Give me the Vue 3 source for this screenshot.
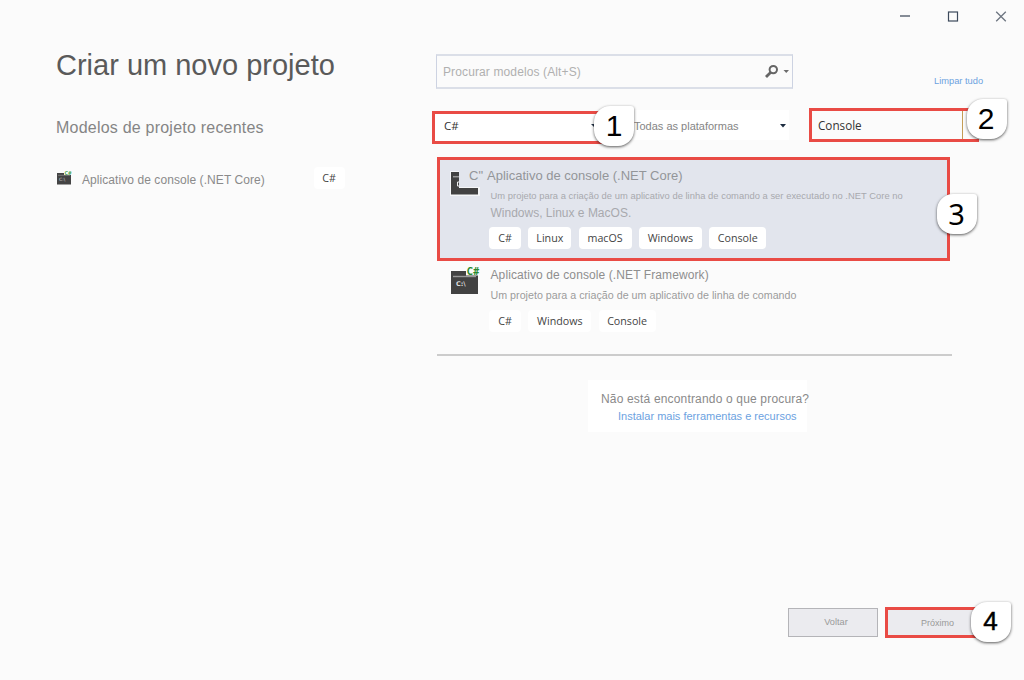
<script setup>
const windowsCore = ['C#', 'Linux', 'macOS', 'Windows', 'Console']
const windowsFramework = ['C#', 'Windows', 'Console']
const tagWidth = { 'C#': 32, Linux: 43, macOS: 53, Windows: 63, Console: 57 }
</script>

<template>
  <div class="window">
    <header class="titlebar">
      <svg width="120" height="32" viewBox="0 0 120 32" fill="none">
        <path d="M4 16H14" stroke="#858c96" stroke-width="2" />
        <rect x="52.500" y="12" width="9" height="9" stroke="#3d4a5c" stroke-width="1.200" />
        <path d="M100.200 11.700L109.800 21.300M109.800 11.700L100.200 21.300" stroke="#6d7580" stroke-width="1.300" />
      </svg>
    </header>

    <main class="body">
      <section class="recent">
        <h1>Criar um novo projeto</h1>
        <h2>Modelos de projeto recentes</h2>
        <div class="recent-item">
          <svg class="mini-icon" width="16" height="16" viewBox="0 0 16 16">
            <path d="M1 3H8V5H15V14.500H1Z" fill="#444" />
            <path d="M2 5.300H14" stroke="#888" stroke-width=".7" />
            <text x="3" y="10.800" class="mini-prompt">C:\</text>
            <text x="8.500" y="4.600" class="mini-sharp">C#</text>
          </svg>
          <span class="recent-name">Aplicativo de console (.NET Core)</span>
          <span class="tag recent-tag">C#</span>
        </div>
      </section>

      <section class="catalog">
        <div class="search-row">
          <div class="search">
            <span>Procurar modelos (Alt+S)</span>
            <svg width="28" height="16" viewBox="0 0 28 16">
              <circle cx="11.300" cy="5.600" r="3.700" fill="none" stroke="#666" stroke-width="2" />
              <path d="M8.800 8.200L4 13" stroke="#666" stroke-width="2.800" />
              <path d="M21.500 6H27L24.250 9Z" fill="#6c6c6c" />
            </svg>
          </div>
          <a class="clear">Limpar tudo</a>
        </div>

        <div class="filters">
          <div class="filter language">
            <span>C#</span>
            <svg class="language-arrow" width="6" height="4" viewBox="0 0 6 4"><path d="M0 0H6L3 3Z" fill="#26364a" /></svg>
            <b class="badge one">1</b>
          </div>
          <div class="filter platform">
            <span>Todas as plataformas</span>
            <svg width="6" height="4" viewBox="0 0 6 4"><path d="M0 0H6L3 3.500Z" fill="#1d2c40" /></svg>
          </div>
          <div class="filter type">
            <span>Console</span>
            <i></i>
            <b class="badge two">2</b>
          </div>
        </div>

        <article class="card selected">
          <svg class="icon" width="32" height="30" viewBox="0 0 32 30">
            <path d="M0 4H9V20H30V29H0Z" fill="#f5f6f8" />
            <path d="M1 5H9V21H28V27.500H1Z" fill="#424242" />
            <path d="M3 9.700H9" stroke="#999" stroke-width="1.500" />
            <path d="M9 15H7.500V19H9" fill="none" stroke="#eee" stroke-width="1" />
          </svg>
          <div class="info">
            <h3><span class="mark">C"</span>Aplicativo de console (.NET Core)</h3>
            <p class="small">Um projeto para a criação de um aplicativo de linha de comando a ser executado no .NET Core no</p>
            <p class="second">Windows, Linux e MacOS.</p>
            <div class="tags">
              <span v-for="tag in windowsCore" :key="tag" class="tag" :style="{ width: tagWidth[tag] + 'px' }">{{ tag }}</span>
            </div>
          </div>
          <b class="badge three">3</b>
        </article>

        <article class="card framework">
          <svg class="icon" width="32" height="30" viewBox="0 0 32 30">
            <path d="M1 5H16V9.500H28V28H1Z" fill="#424242" />
            <path d="M3 10.500H26" stroke="#999" stroke-width="1.400" />
            <text x="6" y="19.500" class="prompt">C:\</text>
            <text x="16.800" y="8.500" class="sharp">C#</text>
          </svg>
          <div class="info">
            <h3>Aplicativo de console (.NET Framework)</h3>
            <p>Um projeto para a criação de um aplicativo de linha de comando</p>
            <div class="tags">
              <span v-for="tag in windowsFramework" :key="tag" class="tag" :style="{ width: tagWidth[tag] + 'px' }">{{ tag }}</span>
            </div>
          </div>
        </article>

        <hr />
        <div class="missing">
          <span>Não está encontrando o que procura?</span>
          <a>Instalar mais ferramentas e recursos</a>
        </div>
      </section>
    </main>

    <footer>
      <button class="back">Voltar</button>
      <button class="next">Próximo<b class="badge four">4</b></button>
    </footer>
  </div>
</template>

<style>
body { background: #fbfbfb; }
</style>

<style scoped>
* { box-sizing: border-box; }
.window { width: 1024px; height: 680px; display: flex; flex-direction: column; overflow: hidden; background: #fbfbfb; color: #888; font-family: "Liberation Sans", Arial, sans-serif; white-space: nowrap; }
.titlebar { height: 32px; display: flex; justify-content: flex-end; padding-right: 8px; }
h1, h2, h3, p { margin: 0; font-weight: 400; }
.body { display: flex; height: 576px; }
.recent { width: 436px; padding: 16px 0 0 56px; }
h1 { font-size: 29px; line-height: 34px; color: #5a5a5a; }
h2 { font-size: 16px; line-height: 20px; letter-spacing: .22px; margin-top: 36px; color: #858585; }
.recent-item { display: flex; align-items: center; height: 22px; margin-top: 29px; }
.mini-icon { flex: none; margin-right: 10px; overflow: visible; }
.mini-prompt { font: 4.500px "DejaVu Sans", sans-serif; fill: #ddd; }
.mini-sharp { font: bold 5.500px "Open Sans", sans-serif; fill: #4ca450; }
.recent-name { width: 231.500px; font-size: 12px; letter-spacing: .07px; padding-top: 3px; color: #8a8a8a; }
.tag { display: flex; justify-content: center; align-items: center; height: 22px; background: #fff; color: #444; border-radius: 4px; font: 10.700px "Open Sans", "Noto Sans", sans-serif; }
.recent-tag { width: 31px; }
.catalog { width: 588px; padding-top: 22px; }
.search-row { display: flex; height: 35px; }
.search { display: flex; justify-content: space-between; align-items: center; width: 357px; height: 35px; padding: 1px 2px 0 6px; border: 2px solid #dbdfe8; border-width: 2px 1px; border-color: #dbdfe8 #cdd3e2; font-size: 12px; letter-spacing: .12px; color: #b0b0b0; }
.clear { font-size: 9.300px; margin: 21px 0 0 141px; line-height: 12px; color: #6ca2df; }
.filters { display: flex; height: 36px; margin: 19px 0 0 -4px; }
.filter { display: flex; align-items: center; position: relative; }
.language { width: 180px; height: 33px; margin-top: 3px; border: 3px solid #e94b45; border-right: 0; background: #fff; padding-left: 9px; font: 11.500px "Open Sans", sans-serif; color: #333; padding-bottom: 4px; }
.language-arrow { margin-left: 132px; }
.platform { width: 177px; height: 30px; margin-top: 2px; background: #fff; justify-content: space-between; padding: 2px 3px 0 22px; font-size: 11px; color: #858585; }
.type { width: 170px; height: 34px; margin-left: 20px; border: 3px solid #e94b45; border-right: 0; padding-left: 6px; font: 11.700px "Open Sans", sans-serif; color: #333; }
.type i { width: 1px; height: 28px; background: #c49c55; margin-left: auto; margin-right: 16px; }
.badge { display: flex; justify-content: center; align-items: center; position: absolute; width: 40px; height: 40px; background: #fff; border-radius: 16px 3px 16px 16px; box-shadow: 0 1px 3px rgba(0,0,0,.65); color: #000; font: 30px/1 "Liberation Sans", sans-serif; z-index: 2; }
.one { left: 159px; top: -8px; }
.two { left: 155px; top: -12px; padding: 0 2px 0 0; }
.three { right: -30px; top: 34px; padding: 0 1px 2px 0; font: 29px/1 "Noto Sans", sans-serif; }
.four { left: 83px; top: -8px; padding: 0 1px 2px 0; font-size: 26px; -webkit-text-stroke: .5px #000; }
.card { display: flex; position: relative; }
.selected { width: 513px; height: 104px; margin: 13px 0 0 1px; border: 3px solid #e94b45; background: #e2e5ed; padding: 7px 0 0 10px; color: #999; }
.icon { flex: none; overflow: visible; }
.info { display: flex; flex-direction: column; margin-left: 8px; }
h3 { font-size: 13px; line-height: 17px; }
.mark { display: inline-block; width: 18px; margin-left: -21px; }
.selected h3 { color: #939599; }
.small { font-size: 9.400px; letter-spacing: .025px; line-height: 12px; margin-top: 6px; margin-left: .500px; color: #a8a9ad; }
.second { font-size: 12px; line-height: 16px; margin-top: 3px; margin-left: .500px; color: #a8a9ad; }
.tags { display: flex; gap: 7.300px; margin-left: -1px; }
.selected .tags { margin-top: 6px; }
.framework { height: 93px; padding: 5px 0 0 14px; }
.framework .info { padding-top: 1px; }
.framework h3 { font-size: 12px; letter-spacing: .1px; line-height: 17px; color: #8e8e8e; margin-left: .500px; }
.framework p { font-size: 10.700px; letter-spacing: .01px; line-height: 14px; margin-top: 4px; margin-left: .500px; color: #9c9c9c; }
.framework .tags { margin-top: 8px; }
.prompt { font: bold 6.500px "DejaVu Sans", sans-serif; fill: #ddd; }
.sharp { font: bold 9.800px "Open Sans", sans-serif; fill: #27892e; }
hr { width: 515px; height: 2px; border: 0; background: #ccc; margin: 0 0 0 1px; }
.missing { display: flex; flex-direction: column; width: 219px; height: 52px; margin: 24px 0 0 152px; background: #fff; padding: 12px 0 0 13px; }
.missing span { font-size: 12px; line-height: 15px; letter-spacing: .17px; color: #8a8a8a; }
.missing a { font-size: 11px; line-height: 14px; margin: 2px 0 0 17px; color: #6ca2df; }
footer { display: flex; padding-left: 788px; }
button { position: relative; border: 1px solid #b4b4b8; background: #ebebef; padding: 0; font: 9.200px "Liberation Sans", sans-serif; color: #999; }
.back { width: 90px; height: 29px; padding: 0 0 2px 6px; }
.next { width: 108px; height: 31px; border: 3px solid #e94b45; border-right: 0; margin: -1px 0 0 7px; padding-right: 6px; font-size: 9px; }
</style>
